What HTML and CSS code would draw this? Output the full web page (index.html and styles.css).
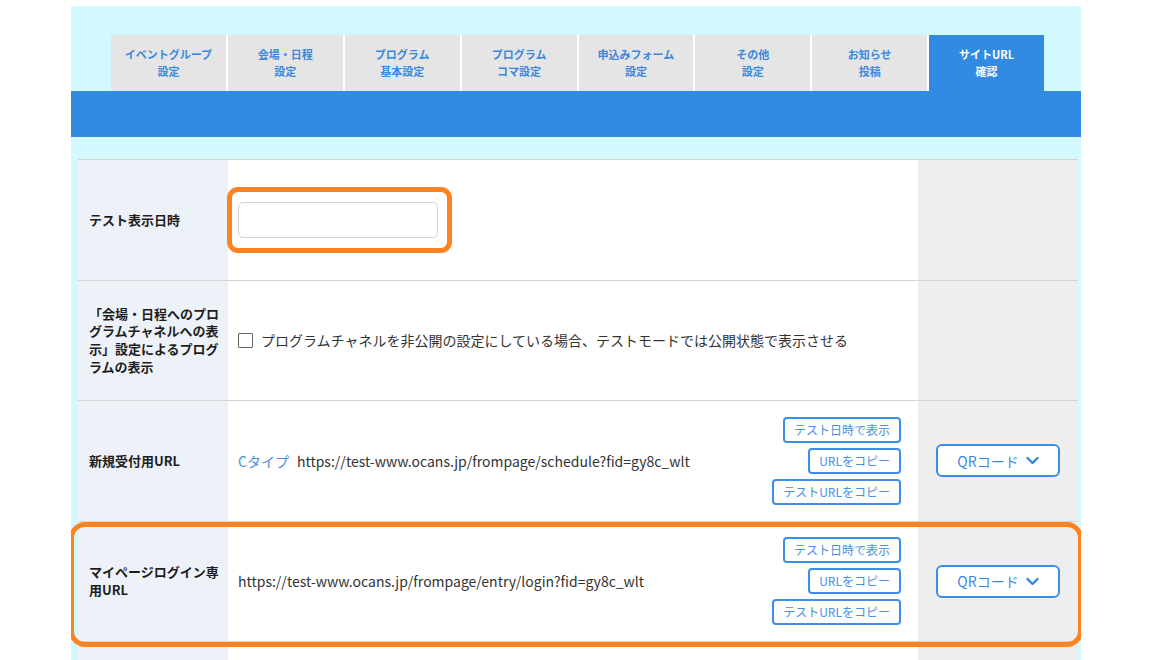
FILE: index.html
```html
<!DOCTYPE html>
<html lang="ja">
<head>
  <meta charset="UTF-8">
  <title>サイトURL確認</title>
  <link rel="stylesheet" href="styles.css">
</head>
<body>
<div class="panel">
  <nav class="tabs">
    <div class="tab">イベントグループ<br>設定</div>
    <div class="tab">会場・日程<br>設定</div>
    <div class="tab">プログラム<br>基本設定</div>
    <div class="tab">プログラム<br>コマ設定</div>
    <div class="tab">申込みフォーム<br>設定</div>
    <div class="tab">その他<br>設定</div>
    <div class="tab">お知らせ<br>投稿</div>
    <div class="tab active">サイトURL<br>確認</div>
  </nav>
  <div class="tabbar"></div>

  <div class="form">
    <div class="row">
      <div class="label">テスト表示日時</div>
      <div class="cell">
        <span class="input-wrap">
          <input type="text" class="date-input">
          <span class="ring"></span>
        </span>
      </div>
      <div class="side"></div>
    </div>

    <div class="row">
      <div class="label">「会場・日程へのプログラムチャネルへの表示」設定によるプログラムの表示</div>
      <div class="cell">
        <label class="check"><span class="box"></span>プログラムチャネルを非公開の設定にしている場合、テストモードでは公開状態で表示させる</label>
      </div>
      <div class="side"></div>
    </div>

    <div class="row">
      <div class="label">新規受付用URL</div>
      <div class="cell url-cell">
        <div class="url"><span class="type">Cタイプ</span>https://test-www.ocans.jp/frompage/schedule?fid=gy8c_wlt</div>
        <div class="actions">
          <button class="btn">テスト日時で表示</button>
          <button class="btn">URLをコピー</button>
          <button class="btn">テストURLをコピー</button>
        </div>
      </div>
      <div class="side">
        <button class="qr">QRコード
          <svg width="13" height="9" viewBox="0 0 13 9"><polyline points="1.5,2 6.5,7 11.5,2" fill="none" stroke="#2f86e0" stroke-width="2.4" stroke-linecap="round" stroke-linejoin="round"/></svg>
        </button>
      </div>
    </div>

    <div class="row marked">
      <div class="label">マイページログイン専用URL</div>
      <div class="cell url-cell">
        <div class="url">https://test-www.ocans.jp/frompage/entry/login?fid=gy8c_wlt</div>
        <div class="actions">
          <button class="btn">テスト日時で表示</button>
          <button class="btn">URLをコピー</button>
          <button class="btn">テストURLをコピー</button>
        </div>
      </div>
      <div class="side">
        <button class="qr">QRコード
          <svg width="13" height="9" viewBox="0 0 13 9"><polyline points="1.5,2 6.5,7 11.5,2" fill="none" stroke="#2f86e0" stroke-width="2.4" stroke-linecap="round" stroke-linejoin="round"/></svg>
        </button>
      </div>
      <span class="row-ring"></span>
    </div>

    <div class="row short"><div class="label"></div><div class="cell"></div><div class="side"></div></div>
  </div>
</div>
</body>
</html>
```

FILE: styles.css
```css
body {
  margin: 0;
  background: #ffffff;
  font-family: "Noto Sans CJK JP", "Noto Sans", sans-serif;
  color: #333;
}
.panel {
  margin: 6px 0 0 71px;
  width: 1010px;
  height: 654px;
  box-sizing: border-box;
  overflow: hidden;
  background: #d2f9fe;
  padding-top: 29px;
}

/* tabs */
.tabs {
  display: flex;
  margin: 0 37px 0 40px;
}
.tab {
  flex: 1;
  height: 56px;
  display: flex;
  align-items: center;
  justify-content: center;
  text-align: center;
  background: #e5e5e5;
  color: #3a88df;
  font-size: 11px;
  font-weight: bold;
  line-height: 17px;
  border-left: 2px solid #fff;
}
.tab:first-child { border-left: none; }
.tab.active {
  background: #318be2;
  color: #fff;
}
.tabbar {
  height: 46px;
  background: #318be2;
  margin-bottom: 22px;
}

/* form rows */
.form {
  margin: 0 3px 0 7px;
}
.row {
  position: relative;
  display: grid;
  grid-template-columns: 150px 1fr 160px;
  min-height: 119.5px;
  border-top: 1px solid #d4d4d4;
}
.row.short {
  min-height: 20px;
}
.label {
  background: #edf2f9;
  display: flex;
  align-items: center;
  padding: 0 8px 0 11px;
  font-size: 13px;
  font-weight: bold;
  line-height: 17.8px;
  color: #1e1e1e;
}
.cell {
  background: #fff;
  display: flex;
  align-items: center;
  padding: 0 17px 0 10px;
  font-size: 14px;
}
.side {
  background: #eeeeee;
  display: flex;
  align-items: center;
  justify-content: center;
}

.input-wrap {
  position: relative;
  display: inline-block;
}
.date-input {
  display: block;
  width: 200px;
  height: 36px;
  box-sizing: border-box;
  border: 1px solid #d2d2d2;
  border-radius: 5px;
  background: #fff;
}
.ring {
  position: absolute;
  top: -15px;
  bottom: -15px;
  left: -11px;
  right: -14px;
  border: 5px solid #fd8322;
  border-radius: 11px;
}

.check {
  display: flex;
  align-items: center;
  color: #333;
}
.box {
  width: 13px;
  height: 13px;
  border: 1.5px solid #666;
  border-radius: 1px;
  margin-right: 8px;
  background: #fff;
}

.url-cell {
  justify-content: space-between;
}
.url {
  color: #333;
}
.type {
  color: #4a90e2;
  margin-right: 8px;
}
.actions {
  display: flex;
  flex-direction: column;
  align-items: flex-end;
  gap: 5px;
}
.btn {
  height: 26px;
  padding: 0 9px;
  border: 2px solid #3a8ee6;
  border-radius: 4px;
  background: #fff;
  color: #4a8fe2;
  font-family: inherit;
  font-size: 12px;
  line-height: 1;
}
.qr {
  width: 124px;
  height: 33px;
  border: 2px solid #3a8ee6;
  border-radius: 6px;
  background: #fff;
  color: #3a88df;
  font-family: inherit;
  font-size: 14px;
  display: flex;
  align-items: center;
  justify-content: center;
  gap: 7px;
}

.row-ring {
  position: absolute;
  z-index: 2;
  top: 0;
  bottom: -6px;
  left: -9px;
  right: -5px;
  border: 5px solid #fd8322;
  border-radius: 16px;
}
```
